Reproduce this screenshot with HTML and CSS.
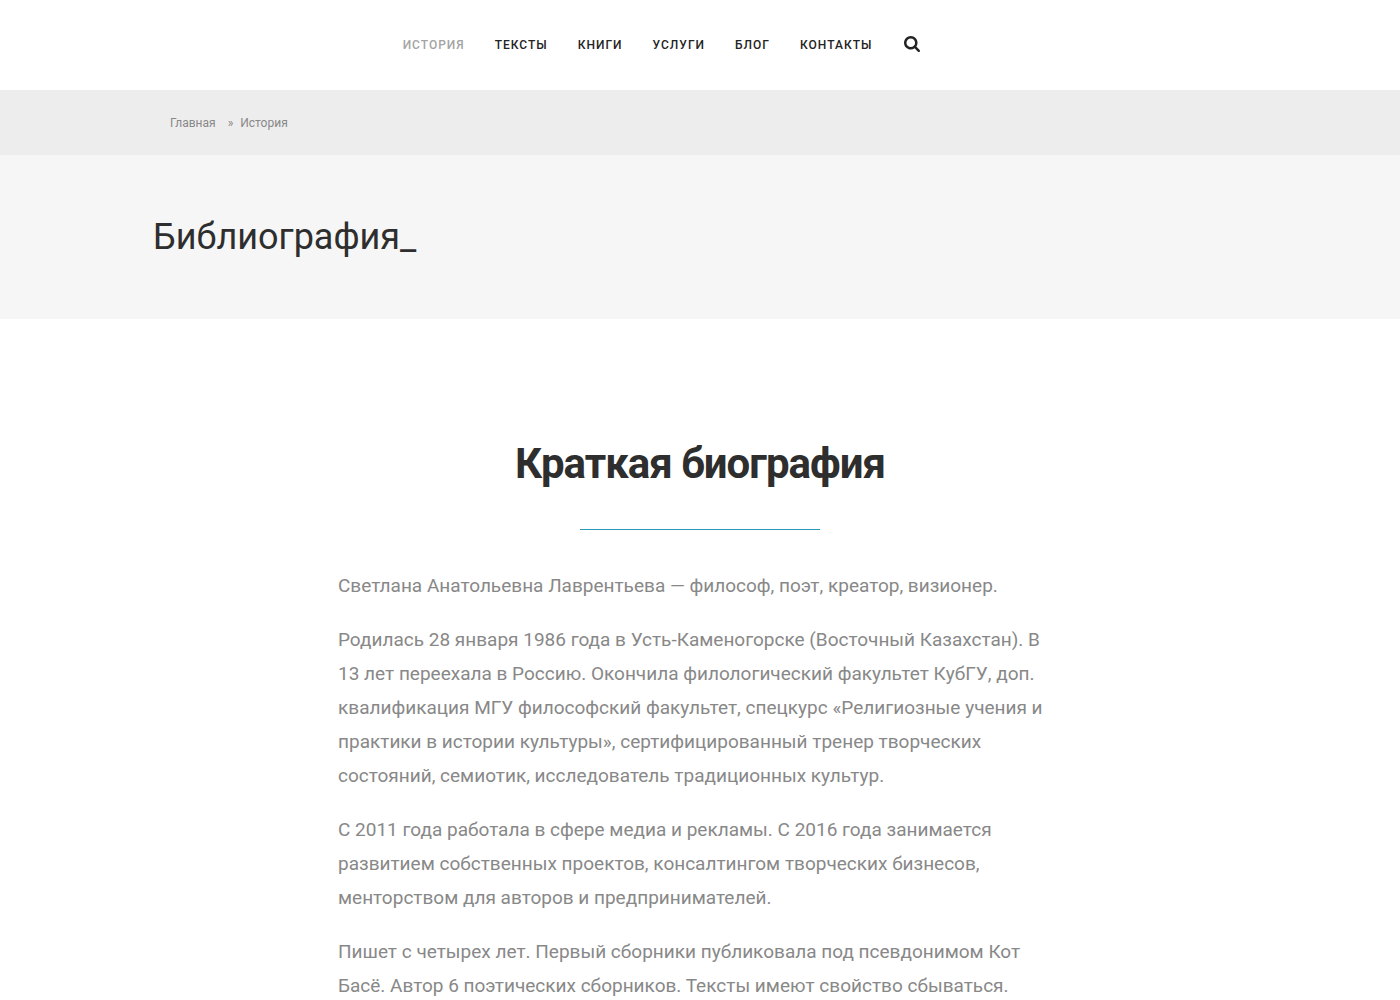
FILE: index.html
```html
<!DOCTYPE html>
<html lang="ru">
<head>
<meta charset="utf-8">
<meta name="viewport" content="width=device-width, initial-scale=1">
<title>История</title>
<link rel="stylesheet" href="styles.css">
</head>
<body>
<header class="header">
  <nav class="menu" aria-label="Основное меню">
    <a class="menu-link current" href="#">История</a>
    <a class="menu-link" href="#">Тексты</a>
    <a class="menu-link" href="#">Книги</a>
    <a class="menu-link" href="#">Услуги</a>
    <a class="menu-link" href="#">Блог</a>
    <a class="menu-link" href="#">Контакты</a>
  </nav>
  <button class="search" type="button" aria-label="Поиск">
    <svg viewBox="0 0 1664 1664" width="16" height="16" aria-hidden="true"><path fill="currentColor" d="M1152 704q0-185-131.500-316.500T704 256 387.500 387.500 256 704t131.500 316.500T704 1152t316.500-131.500T1152 704zm512 832q0 52-38 90t-90 38q-54 0-90-38l-343-342q-179 124-399 124-143 0-273.500-55.500t-225-150-150-225T0 704t55.500-273.500 150-225 225-150T704 0t273.500 55.500 225 150 150 225T1408 704q0 220-124 399l343 343q37 37 37 90z"/></svg>
  </button>
</header>
<nav class="breadcrumbs" aria-label="Навигация">
  <div class="container crumbs">
    <a class="crumb" href="#">Главная</a>
    <span class="separator">»</span>
    <span>История</span>
  </div>
</nav>
<section class="title-band">
  <div class="container"><h1 class="page-title">Библиография_</h1></div>
</section>
<main class="biography">
  <h2 class="heading">Краткая биография</h2>
  <hr class="divider">
  <p>Светлана Анатольевна Лаврентьева — философ, поэт, креатор, визионер.</p>
  <p>Родилась 28 января 1986 года в Усть-Каменогорске (Восточный Казахстан). В 13 лет переехала в Россию. Окончила филологический факультет <span class="abbreviation">КубГУ,</span> доп. квалификация МГУ философский факультет, спецкурс «Религиозные учения и практики в истории культуры», сертифицированный тренер творческих состояний, семиотик, исследователь традиционных культур.</p>
  <p>С 2011 года работала в сфере медиа и рекламы. С 2016 года занимается развитием собственных проектов, консалтингом творческих бизнесов, менторством для авторов и предпринимателей.</p>
  <p>Пишет с четырех лет. Первый сборники публиковала под псевдонимом Кот Басё. Автор 6 поэтических сборников. Тексты имеют свойство сбываться.</p>
</main>
</body>
</html>
```

FILE: styles.css
```css
* { box-sizing: border-box; }
body {
  margin: 0;
  background: #fff;
  color: #888;
  font-family: Roboto, "Liberation Sans", sans-serif;
}
a { color: inherit; text-decoration: none; }
.header {
  display: flex;
  align-items: center;
  justify-content: center;
  gap: 32px;
  height: 90px;
  padding-right: 77px;
}
.menu { display: flex; gap: 30px; }
.menu-link {
  color: #232323;
  font-size: 12px;
  font-weight: 500;
  line-height: 18px;
  letter-spacing: 1px;
  text-transform: uppercase;
}
.current { color: #a4a4a4; }
.search {
  display: flex;
  padding: 0 0 2px;
  border: 0;
  background: none;
  color: #232323;
  cursor: pointer;
}
.container { max-width: 1094px; margin: 0 auto; }
.breadcrumbs { padding: 25px 0 23px; background: #ededed; }
.crumbs {
  display: flex;
  padding-left: 17px;
  font-size: 12px;
  line-height: 17px;
}
.separator { margin: 0 7px 0 12px; }
.title-band { padding: 60px 0; background: #f6f6f6; }
.page-title {
  margin: 0;
  color: #2e2e2e;
  font-size: 36px;
  font-weight: 400;
  line-height: 44px;
}
.biography {
  max-width: 724px;
  margin: 0 auto;
  padding: 120px 0 60px;
  font-size: 19px;
  line-height: 34px;
}
.heading {
  margin: 0 0 40px;
  color: #2e2e2e;
  font-size: 42px;
  font-weight: 700;
  line-height: 50px;
  letter-spacing: -1px;
  text-align: center;
}
.divider {
  width: 240px;
  height: 1px;
  margin: 0 auto 39px;
  border: 0;
  background: #2b97b9;
}
.biography p { margin: 0 0 20px; }
.abbreviation { font-kerning: none; }
```
